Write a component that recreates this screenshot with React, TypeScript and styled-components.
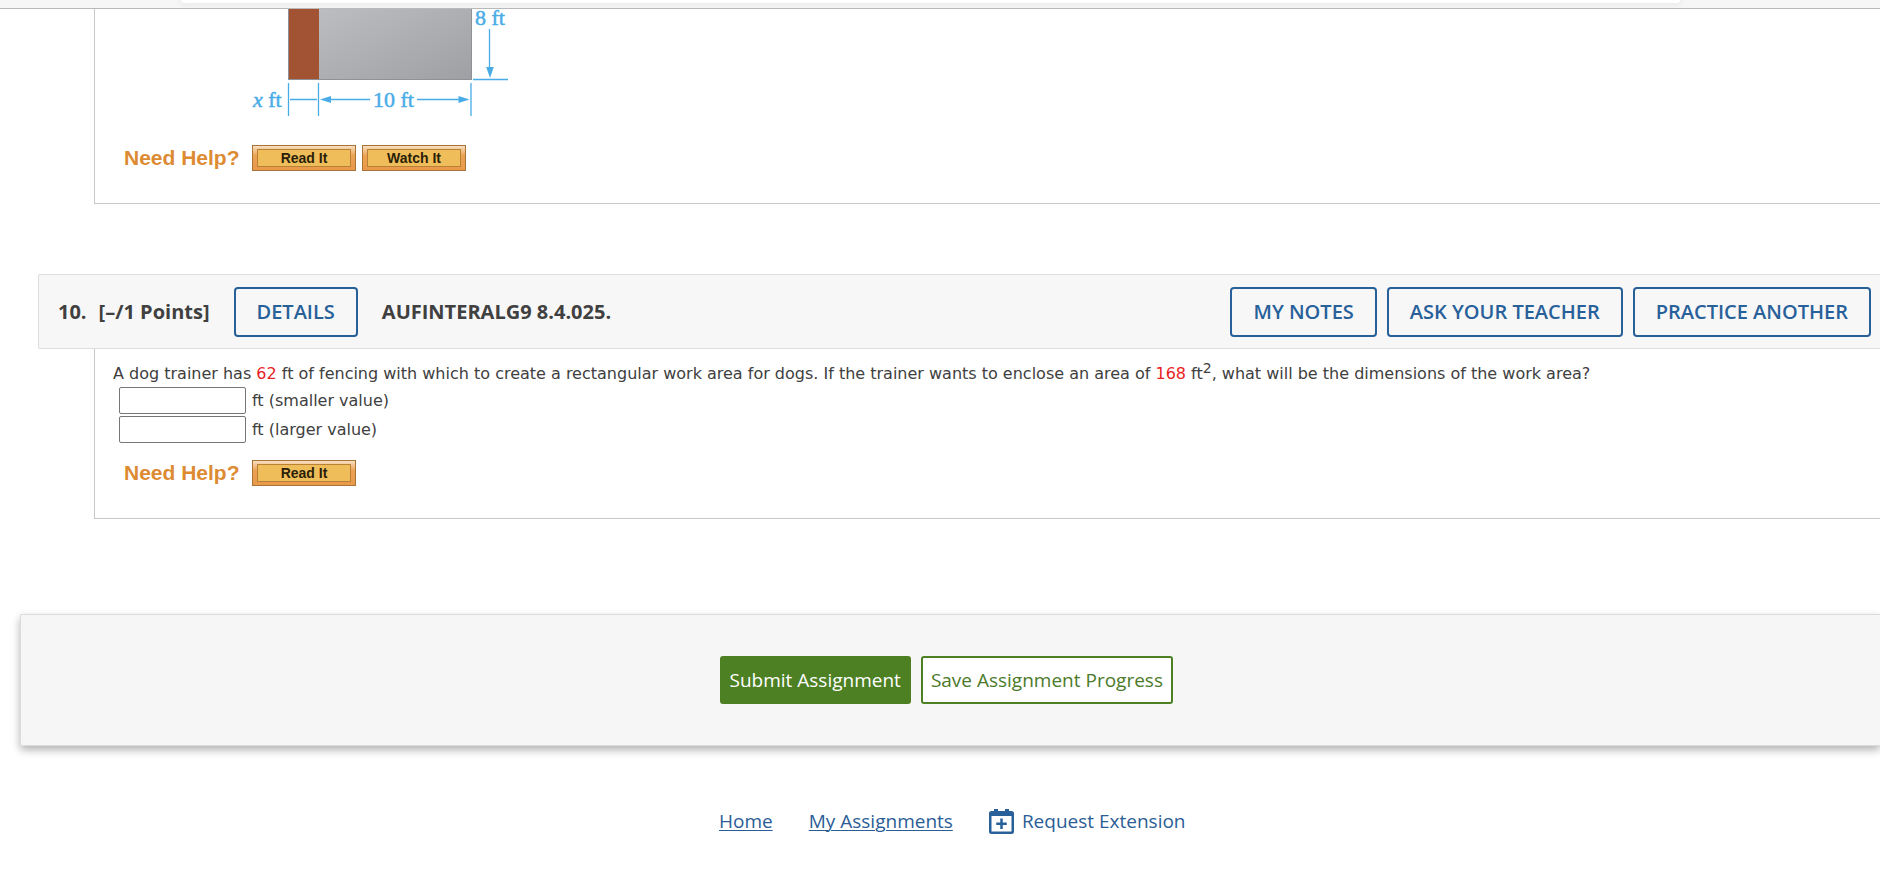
import React from "react";
import styled, { createGlobalStyle } from "styled-components";

const GlobalStyle = createGlobalStyle`
  *, *::before, *::after { box-sizing: border-box; }
  body {
    margin: 0;
    background: #fff;
    color: #404040;
    font-family: "Open Sans", sans-serif;
    font-size: 19px;
    overflow-x: hidden;
  }
`;

const TopBar = styled.header`
  height: 9px;
  padding: 0 200px 0 181px;
  background: #f6f6f6;
  border-bottom: 1px solid #b9b9b9;
  overflow: hidden;
`;

const TopCard = styled.div`
  height: 3px;
  background: #fff;
  border-radius: 0 0 6px 6px;
  box-shadow: 0 1px 4px 2px #ececec;
`;

const QuestionPanel = styled.section`
  margin-left: 94px;
  padding: 0 18px 32px;
  border-left: 1px solid #c8c8c8;
  border-bottom: 1px solid #c8c8c8;
`;

const Figure = styled.svg`
  display: block;
  margin: 0 0 21px 127px;
  overflow: visible;
`;

const HelpRow = styled.div`
  display: flex;
  align-items: center;
  gap: 6px;
  padding-left: 11px;
  font-family: "Liberation Sans", Arial, sans-serif;
  font-weight: 700;
`;

const HelpLabel = styled.span`
  width: 122px;
  color: #dd8b33;
  font-size: 21px;
  line-height: 26px;
  white-space: nowrap;
`;

const HelpButton = styled.button`
  width: 104px;
  height: 26px;
  padding: 3px 4px;
  border: 1px solid #a87436;
  background: linear-gradient(#f8dfc0, #eba252 40%, #e9994a);
  font: inherit;
  font-size: 14px;
  line-height: 16px;
  color: #2b1f06;
  cursor: pointer;
`;

const HelpFace = styled.span`
  display: block;
  border: 1px solid #b98136;
  background: #f0bd5b;
`;

const QuestionHeader = styled.div`
  display: flex;
  align-items: center;
  height: 75px;
  margin: 70px 0 0 38px;
  padding: 0 9px 0 19px;
  background: #f7f7f7;
  border: 1px solid #ddd;
  border-right: 0;
  border-radius: 2px 0 0 2px;
  font-size: 20px;
  font-weight: 700;
  white-space: nowrap;
`;

const Points = styled.span`
  margin: 0 24px 0 12px;
`;

const Source = styled.span`
  margin-left: 24px;
`;

const Actions = styled.div`
  display: flex;
  gap: 10px;
  margin-left: auto;
`;

const OutlineButton = styled.button`
  height: 50px;
  padding: 0 21px;
  border: 2px solid #28609a;
  border-radius: 4px;
  background: transparent;
  color: #28609a;
  font: inherit;
  font-weight: 600;
  cursor: pointer;
`;

const Problem = styled.div`
  padding-top: 12px;
  font-family: Verdana, "DejaVu Sans", sans-serif;
  font-size: 16px;
  line-height: 26px;
`;

const Prompt = styled.p`
  margin: 0;
  sup { font-size: 14px; line-height: 0; }
`;

const Value = styled.span`
  color: #e8231f;
`;

const AnswerRow = styled.label`
  display: flex;
  align-items: center;
  gap: 6px;
  margin: 0 0 2px 6px;
`;

const AnswerInput = styled.input`
  width: 127px;
  height: 27px;
  border: 1px solid #767676;
  border-radius: 2px;
  background: #fff;
  font: inherit;
`;

const AnswerHelp = styled(HelpRow)`
  margin-top: 17px;
`;

const SubmitPanel = styled.section`
  margin: 95px 0 0 20px;
  padding: 41px 0;
  background: #f6f6f6;
  border: 1px solid #dcdcdc;
  border-right: 0;
  border-radius: 2px 0 0 2px;
  box-shadow: 0 4px 8px rgba(0, 0, 0, 0.3);
`;

const Centered = styled.div<{ $gap: number }>`
  display: flex;
  align-items: center;
  gap: ${(p) => p.$gap}px;
  width: 462px;
  margin: 0 auto;
  white-space: nowrap;
`;

const GreenButton = styled.button<{ $filled?: boolean }>`
  flex: none;
  height: 48px;
  padding: 0 8px;
  border: 2px solid #4c8023;
  border-radius: 3px;
  background: ${(p) => (p.$filled ? "#4c8023" : "#fff")};
  color: ${(p) => (p.$filled ? "#fff" : "#4c7a2a")};
  font: inherit;
  cursor: pointer;
`;

const Footer = styled.footer`
  margin: 62px 0 0 20px;
  padding-bottom: 30px;
`;

const FooterLink = styled.a<{ $plain?: boolean }>`
  display: flex;
  flex: none;
  align-items: center;
  gap: 8px;
  color: #2b5d96;
  text-decoration: ${(p) => (p.$plain ? "none" : "underline")};
  text-decoration-thickness: 1px;
  text-underline-offset: 2px;
`;

function WalkwayFigure() {
  return (
    <Figure width="270" height="115" viewBox="240 9 270 115" role="img" aria-label="Rectangle with side strip of x ft, 10 ft wide and 8 ft tall">
      <defs>
        <linearGradient id="slab" x1="0" y1="0" x2="1" y2="1">
          <stop offset="0" stopColor="#bcbdc1" />
          <stop offset="1" stopColor="#9fa0a4" />
        </linearGradient>
      </defs>
      <rect x="288" y="9" width="184" height="71" fill="#909196" />
      <rect x="289" y="9" width="30" height="70" fill="#a15333" />
      <rect x="319" y="9" width="152" height="70" fill="url(#slab)" />
      <g stroke="#4aace6" strokeWidth="1.3" fill="none">
        <path d="M288.5 83v33M318.5 83v33M471 83v33M290 99.500h27M326 99.500h44M417 99.500h46M489.500 29v42M473 79.500h35" />
      </g>
      <path d="M320 99.500l11-3.500v7zM469.500 99.500l-11-3.500v7zM490 78l-3.800-11h7.600z" fill="#4aace6" />
      <g fill="#4aace6" stroke="#4aace6" strokeWidth="0.500" fontFamily="'Liberation Serif', serif" fontSize="22">
        <text x="475" y="25">8 ft</text>
        <text x="373" y="107">10 ft</text>
        <text x="253" y="107"><tspan fontStyle="italic">x</tspan> ft</text>
      </g>
    </Figure>
  );
}

function Help({ children }: { children: string }) {
  return (
    <HelpButton type="button">
      <HelpFace>{children}</HelpFace>
    </HelpButton>
  );
}

function CalendarPlus() {
  return (
    <svg width="25" height="25" viewBox="0 0 25 25" aria-hidden="true">
      <path fill="#28609a" fillRule="evenodd" d="M5 0h4v2h7V0h4v2h2.500A2.500 2.500 0 0 1 25 4.500v18a2.500 2.500 0 0 1-2.500 2.500h-20A2.500 2.500 0 0 1 0 22.500v-18A2.500 2.500 0 0 1 2.500 2H5zM2.500 7v15.500h20V7z" />
      <path stroke="#28609a" strokeWidth="2.500" d="M12.500 9.500v10.500M7.250 14.750h10.500" />
    </svg>
  );
}

export default function App() {
  return (
    <>
      <GlobalStyle />
      <TopBar><TopCard /></TopBar>
      <main>
        <QuestionPanel>
          <WalkwayFigure />
          <HelpRow>
            <HelpLabel>Need Help?</HelpLabel>
            <Help>Read It</Help>
            <Help>Watch It</Help>
          </HelpRow>
        </QuestionPanel>

        <QuestionHeader>
          <span>10.</span>
          <Points>[–/1 Points]</Points>
          <OutlineButton type="button">DETAILS</OutlineButton>
          <Source>AUFINTERALG9 8.4.025.</Source>
          <Actions>
            <OutlineButton type="button">MY NOTES</OutlineButton>
            <OutlineButton type="button">ASK YOUR TEACHER</OutlineButton>
            <OutlineButton type="button">PRACTICE ANOTHER</OutlineButton>
          </Actions>
        </QuestionHeader>
        <QuestionPanel>
          <Problem>
            <Prompt>
              A dog trainer has <Value>62</Value> ft of fencing with which to create a rectangular work area for dogs. If the trainer wants to enclose an area of <Value>168</Value> ft<sup>2</sup>, what will be the dimensions of the work area?
            </Prompt>
            <AnswerRow><AnswerInput type="text" />ft (smaller value)</AnswerRow>
            <AnswerRow><AnswerInput type="text" />ft (larger value)</AnswerRow>
          </Problem>
          <AnswerHelp>
            <HelpLabel>Need Help?</HelpLabel>
            <Help>Read It</Help>
          </AnswerHelp>
        </QuestionPanel>

        <SubmitPanel>
          <Centered $gap={10}>
            <GreenButton type="submit" $filled>Submit Assignment</GreenButton>
            <GreenButton type="button">Save Assignment Progress</GreenButton>
          </Centered>
        </SubmitPanel>
      </main>
      <Footer>
        <Centered as="nav" $gap={36}>
          <FooterLink href="#home">Home</FooterLink>
          <FooterLink href="#assignments">My Assignments</FooterLink>
          <FooterLink href="#extension" $plain><CalendarPlus />Request Extension</FooterLink>
        </Centered>
      </Footer>
    </>
  );
}
